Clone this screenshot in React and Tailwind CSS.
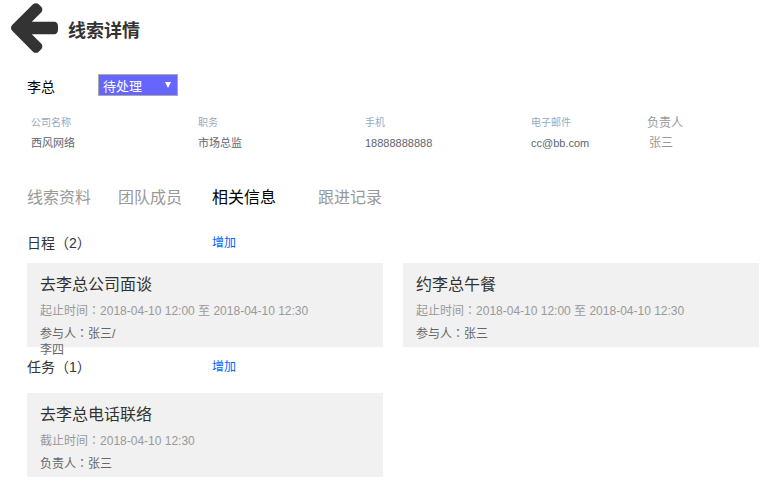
import { useState } from "react";

const infoFields = [
  { label: "公司名称", value: "西风网络" },
  { label: "职务", value: "市场总监" },
  { label: "手机", value: "18888888888" },
  { label: "电子邮件", value: "cc@bb.com" },
];

const tabs = [
  { name: "线索资料", width: "w-[91px]" },
  { name: "团队成员", width: "w-[94px]" },
  { name: "相关信息", width: "w-[106px]" },
  { name: "跟进记录", width: "w-[91px]" },
];

const schedules = [
  {
    title: "去李总公司面谈",
    timeLabel: "起止时间",
    time: "2018-04-10 12:00 至 2018-04-10 12:30",
    peopleLabel: "参与人",
    people: "张三/李四",
  },
  {
    title: "约李总午餐",
    timeLabel: "起止时间",
    time: "2018-04-10 12:00 至 2018-04-10 12:30",
    peopleLabel: "参与人",
    people: "张三",
  },
];

const tasks = [
  {
    title: "去李总电话联络",
    timeLabel: "截止时间",
    time: "2018-04-10 12:30",
    peopleLabel: "负责人",
    people: "张三",
  },
];

// Full-width punctuation centred in its em box.
function Mark({ children }) {
  return (
    <span className="font-['Noto_Sans_CJK_TC',sans-serif] leading-none">
      {children}
    </span>
  );
}

function BackArrow() {
  return (
    <svg
      viewBox="0 21 1472 1558"
      className="h-[50px] w-[47px]"
      fill="currentColor"
      aria-hidden="true"
    >
      <path d="M1472 736v128q0 53-32.5 90.5t-84.5 37.5h-704l293 294q38 36 38 90t-38 90l-75 76q-37 37-90 37-52 0-91-37l-651-652q-37-37-37-90 0-52 37-91l651-650q38-38 91-38 52 0 90 38l75 74q38 38 38 91t-38 91l-293 293h704q52 0 84.5 37.5t32.5 90.5z" />
    </svg>
  );
}

function Card({ item }) {
  return (
    <article className="h-[84px] bg-[#f1f1f1] px-[13px] pt-2.5">
      <h3 className="text-base leading-6 text-[#333333]">{item.title}</h3>
      <p className="mt-1.5 text-xs leading-4 whitespace-nowrap text-[#999999]">
        {item.timeLabel}
        <Mark>：</Mark>
        {item.time}
      </p>
      <p className="mt-[7px] w-20 text-xs leading-4 text-[#666666]">
        {item.peopleLabel}
        <Mark>：</Mark>
        {item.people}
      </p>
    </article>
  );
}

function Section({ name, items, gap }) {
  return (
    <section>
      <div className={`flex h-10 items-center ${gap}`}>
        <h2 className="w-[185px] text-sm leading-5 text-[#333333]">
          {name}
          <Mark>（</Mark>
          {items.length}
          <Mark>）</Mark>
        </h2>
        <button type="button" className="text-xs leading-4 text-[#0066ff]">
          增加
        </button>
      </div>
      <div className="grid grid-cols-2 gap-5">
        {items.map((item) => (
          <Card key={item.title} item={item} />
        ))}
      </div>
    </section>
  );
}

export default function App() {
  const [active, setActive] = useState("相关信息");
  const [status, setStatus] = useState("待处理");

  return (
    <div className="bg-white font-['Liberation_Sans','Noto_Sans_CJK_SC',sans-serif] text-black">
      <header className="flex items-center gap-2.5 pt-[3px] pl-[11px] text-[#333333]">
        <button type="button" aria-label="返回">
          <BackArrow />
        </button>
        <h1 className="pt-1.5 text-lg leading-6 font-bold">线索详情</h1>
      </header>

      <main className="pt-[21px] pr-[15px] pl-[27px]">
        <div className="flex h-[22px] items-center">
          <label htmlFor="status" className="w-[71px] pt-1 text-sm leading-5">
            李总
          </label>
          <div className="relative">
            <select
              id="status"
              value={status}
              onChange={(e) => setStatus(e.target.value)}
              className="block h-[22px] w-20 appearance-none border border-[#a9a9a9] bg-[#6666ff] px-1 pt-0.5 text-[13px] leading-5 text-white"
            >
              <option>待处理</option>
              <option>已处理</option>
            </select>
            <svg
              viewBox="0 0 6 6"
              className="pointer-events-none absolute top-2 right-[7px] h-1.5 w-1.5"
              fill="white"
              aria-hidden="true"
            >
              <path d="M0 0h6L3 6z" />
            </svg>
          </div>
        </div>

        <dl className="grid grid-cols-[167fr_167fr_166fr_116fr_112fr] pt-[19px] pl-1">
          {infoFields.map((field) => (
            <div key={field.label}>
              <dt className="text-[10px] leading-4 text-[#99a9bf]">
                {field.label}
              </dt>
              <dd className="pt-1 text-[11px] leading-4 text-[#5e6570]">
                {field.value}
              </dd>
            </div>
          ))}
          <div>
            <dt className="text-xs leading-4 text-[#999999]">负责人</dt>
            <dd className="pt-1 pl-0.5 text-xs leading-4 text-[#999999]">
              张三
            </dd>
          </div>
        </dl>

        <nav className="flex pt-[35px] pb-[13px]">
          {tabs.map((tab) => (
            <button
              key={tab.name}
              type="button"
              onClick={() => setActive(tab.name)}
              className={`${tab.width} text-left text-base leading-6 ${
                active === tab.name ? "text-black" : "text-[#999999]"
              }`}
            >
              {tab.name}
            </button>
          ))}
        </nav>

        <Section name="日程" items={schedules} gap="mb-0" />
        <Section name="任务" items={tasks} gap="mb-1.5" />
      </main>
    </div>
  );
}
